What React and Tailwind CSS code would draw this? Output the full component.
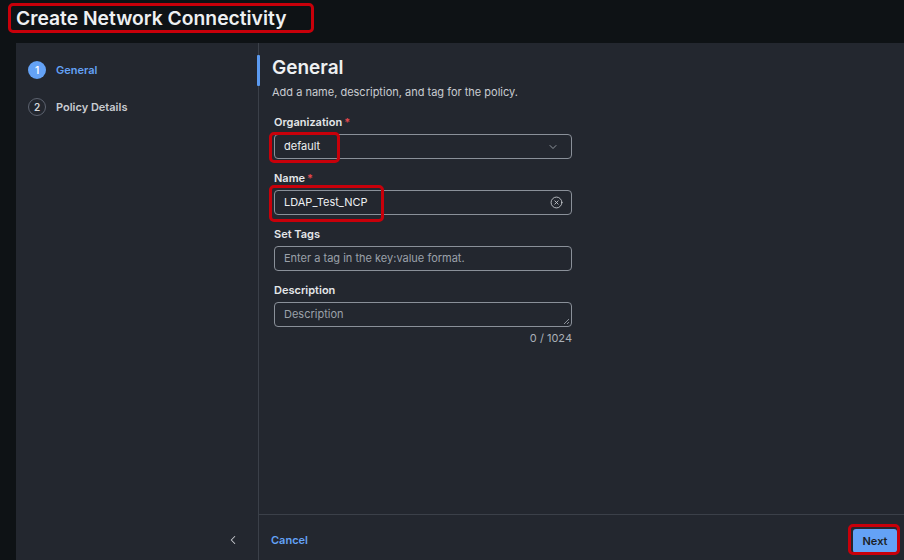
import { ChevronDown, ChevronLeft, CircleX } from 'lucide-react';

const steps = [
    { n: 1, label: 'General', active: true },
    { n: 2, label: 'Policy Details', active: false },
];

// Red highlight frame drawn on top of an element
const Mark = ({ className }) => (
    <div className={`absolute border-[3px] border-[#c8000a] rounded-[5px] pointer-events-none ${className}`} />
);

const Label = ({ children, required }) => (
    <div className="text-[11px] font-semibold text-[#e4e6e9] leading-[14px] mb-[5px]">
        {children}
        {required && <span className="text-[#e5484d] ml-[2px]">*</span>}
    </div>
);

const App = () => {
    return (
        <div className="w-[904px] h-[560px] bg-[#0e1215] flex flex-col overflow-hidden font-['Inter',sans-serif] text-[#e4e6e9]">
            {/* Header */}
            <div className="h-[43px] flex items-start pl-4 pt-[6px]">
                <div className="relative">
                    <h1 className="text-[19.3px] font-semibold leading-[24px] text-[#eef0f2]">Create Network Connectivity</h1>
                    <Mark className="-left-[8px] -top-[3px] w-[306px] h-[30px]" />
                </div>
            </div>

            {/* Wizard panel */}
            <div className="flex-1 ml-4 bg-[#23272f] flex min-h-0">
                {/* Steps */}
                <div className="w-[243px] border-r border-[#3b4049] flex flex-col">
                    <div className="flex flex-col gap-[19px] pt-[18px] pl-3">
                        {steps.map((s) => (
                            <div key={s.n} className="flex items-center gap-[10px] h-[18px]">
                                <div
                                    className={
                                        s.active
                                            ? 'w-[18px] h-[18px] rounded-full bg-[#64a2f6] text-[#f4f8ff] text-[10px] font-semibold flex items-center justify-center'
                                            : 'w-[18px] h-[18px] rounded-full border border-[#5d6370] text-[#d5d8dc] text-[10px] font-semibold flex items-center justify-center'
                                    }
                                >
                                    {s.n}
                                </div>
                                <span className={s.active ? 'text-[11px] font-semibold text-[#64a2f6]' : 'text-[11px] font-semibold text-[#c9ccd1]'}>
                                    {s.label}
                                </span>
                            </div>
                        ))}
                    </div>
                    <div className="mt-auto h-[46px] pt-[6px] flex items-center justify-end pr-[18px]">
                        <ChevronLeft size={14} strokeWidth={1.8} className="text-[#c9ccd1]" />
                    </div>
                </div>

                {/* Form */}
                <div className="flex-1 flex flex-col min-w-0">
                    <div className="flex-1 relative pl-[13px] pt-[13px]">
                        <div className="absolute -left-[2px] top-[12px] w-[3px] h-[31px] bg-[#5b9af0] rounded-[1px]" />
                        <h2 className="text-[19px] font-semibold leading-[24px] text-[#eef0f2]">General</h2>
                        <p className="text-[11px] text-[#c9ccd1] mt-[5px] leading-[14px]">Add a name, description, and tag for the policy.</p>

                        <div className="w-[298px] ml-[2px] mt-[16px] flex flex-col">
                            <Label required>Organization</Label>
                            <div className="relative h-[25px] border border-[#8a9099] rounded-[4px] flex items-center pl-[9px] pr-[12px] justify-between">
                                <span className="text-[11px] text-[#eef0f2]">default</span>
                                <ChevronDown size={12} strokeWidth={1.6} className="text-[#aab0b8]" />
                                <Mark className="-left-[6px] -top-[3px] w-[71px] h-[31px]" />
                            </div>

                            <div className="mt-[12px]">
                                <Label required>Name</Label>
                                <div className="relative h-[25px] border border-[#8a9099] rounded-[4px] flex items-center pl-[9px] pr-[8px] justify-between">
                                    <span className="text-[11px] text-[#eef0f2]">LDAP_Test_NCP</span>
                                    <CircleX size={13} strokeWidth={1.6} className="text-[#c9ccd1]" />
                                    <Mark className="-left-[6px] -top-[6px] w-[115px] h-[37px]" />
                                </div>
                            </div>

                            <div className="mt-[12px]">
                                <Label>Set Tags</Label>
                                <div className="h-[25px] border border-[#8a9099] rounded-[4px] flex items-center pl-[9px]">
                                    <span className="text-[11px] text-[#9ba1aa]">Enter a tag in the key:value format.</span>
                                </div>
                            </div>

                            <div className="mt-[12px]">
                                <Label>Description</Label>
                                <div className="relative h-[25px] border border-[#8a9099] rounded-[4px] flex items-center pl-[9px]">
                                    <span className="text-[11px] text-[#9ba1aa]">Description</span>
                                    <svg className="absolute right-[1px] bottom-[1px]" width="7" height="7" viewBox="0 0 7 7">
                                        <path d="M6 1 L1 6 M6 4 L4 6" stroke="#8a9099" strokeWidth="1" />
                                    </svg>
                                </div>
                                <div className="text-right text-[11px] text-[#aab0b8] mt-[4px] leading-[14px]">0 / 1024</div>
                            </div>
                        </div>
                    </div>

                    {/* Footer */}
                    <div className="h-[46px] border-t border-[#3b4049] pt-[5px] flex items-center justify-between pl-3 pr-[7px]">
                        <button className="text-[11px] font-semibold text-[#64a2f6]">Cancel</button>
                        <div className="relative">
                            <button className="h-[24px] w-[44px] rounded-[3px] bg-[#64a2f6] text-[11px] font-semibold text-[#1b1f26]">Next</button>
                            <Mark className="-left-[5px] -top-[3px] w-[52px] h-[31px]" />
                        </div>
                    </div>
                </div>
            </div>
        </div>
    );
};

export default App;
